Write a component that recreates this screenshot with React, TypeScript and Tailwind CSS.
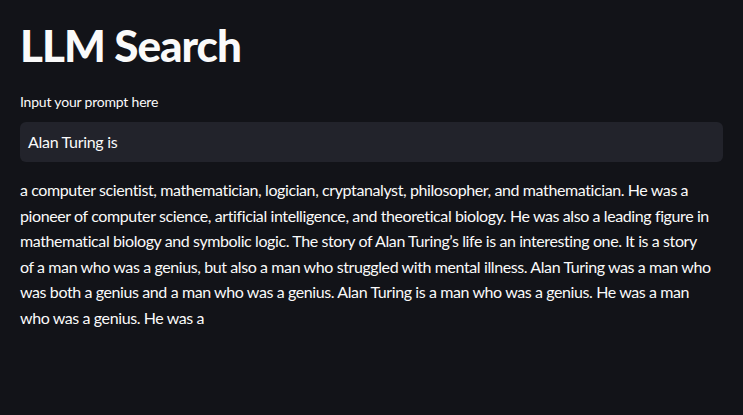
const lines = [
  "a computer scientist, mathematician, logician, cryptanalyst, philosopher, and mathematician. He was a",
  "pioneer of computer science, artificial intelligence, and theoretical biology. He was also a leading figure in",
  "mathematical biology and symbolic logic. The story of Alan Turing\u2019s life is an interesting one. It is a story",
  "of a man who was a genius, but also a man who struggled with mental illness. Alan Turing was a man who",
  "was both a genius and a man who was a genius. Alan Turing is a man who was a genius. He was a man",
  "who was a genius. He was a",
];

export default function App() {
  return (
    <div className="min-h-[415px] w-full bg-[#121318] text-[#fafafa] font-['Lato',sans-serif]">
      <div className="px-5 pt-[16px]">
        <h1 className="text-[44px] font-black leading-[58px] tracking-[-1px]">LLM Search</h1>

        <label className="mt-[18px] block text-[14px] leading-[20px] tracking-[-0.2px]">Input your prompt here</label>

        <div className="mt-[10px] flex h-[40px] items-center rounded-[6px] bg-[#22232b] px-2">
          <span className="text-[16px] tracking-[-0.3px]">Alan Turing is</span>
        </div>

        <div className="mt-[15px] text-[16px] leading-[25.6px] tracking-[-0.4px]">
          {lines.map((l, i) => (
            <div key={i} className="whitespace-nowrap">
              {l}
            </div>
          ))}
        </div>
      </div>
    </div>
  );
}
